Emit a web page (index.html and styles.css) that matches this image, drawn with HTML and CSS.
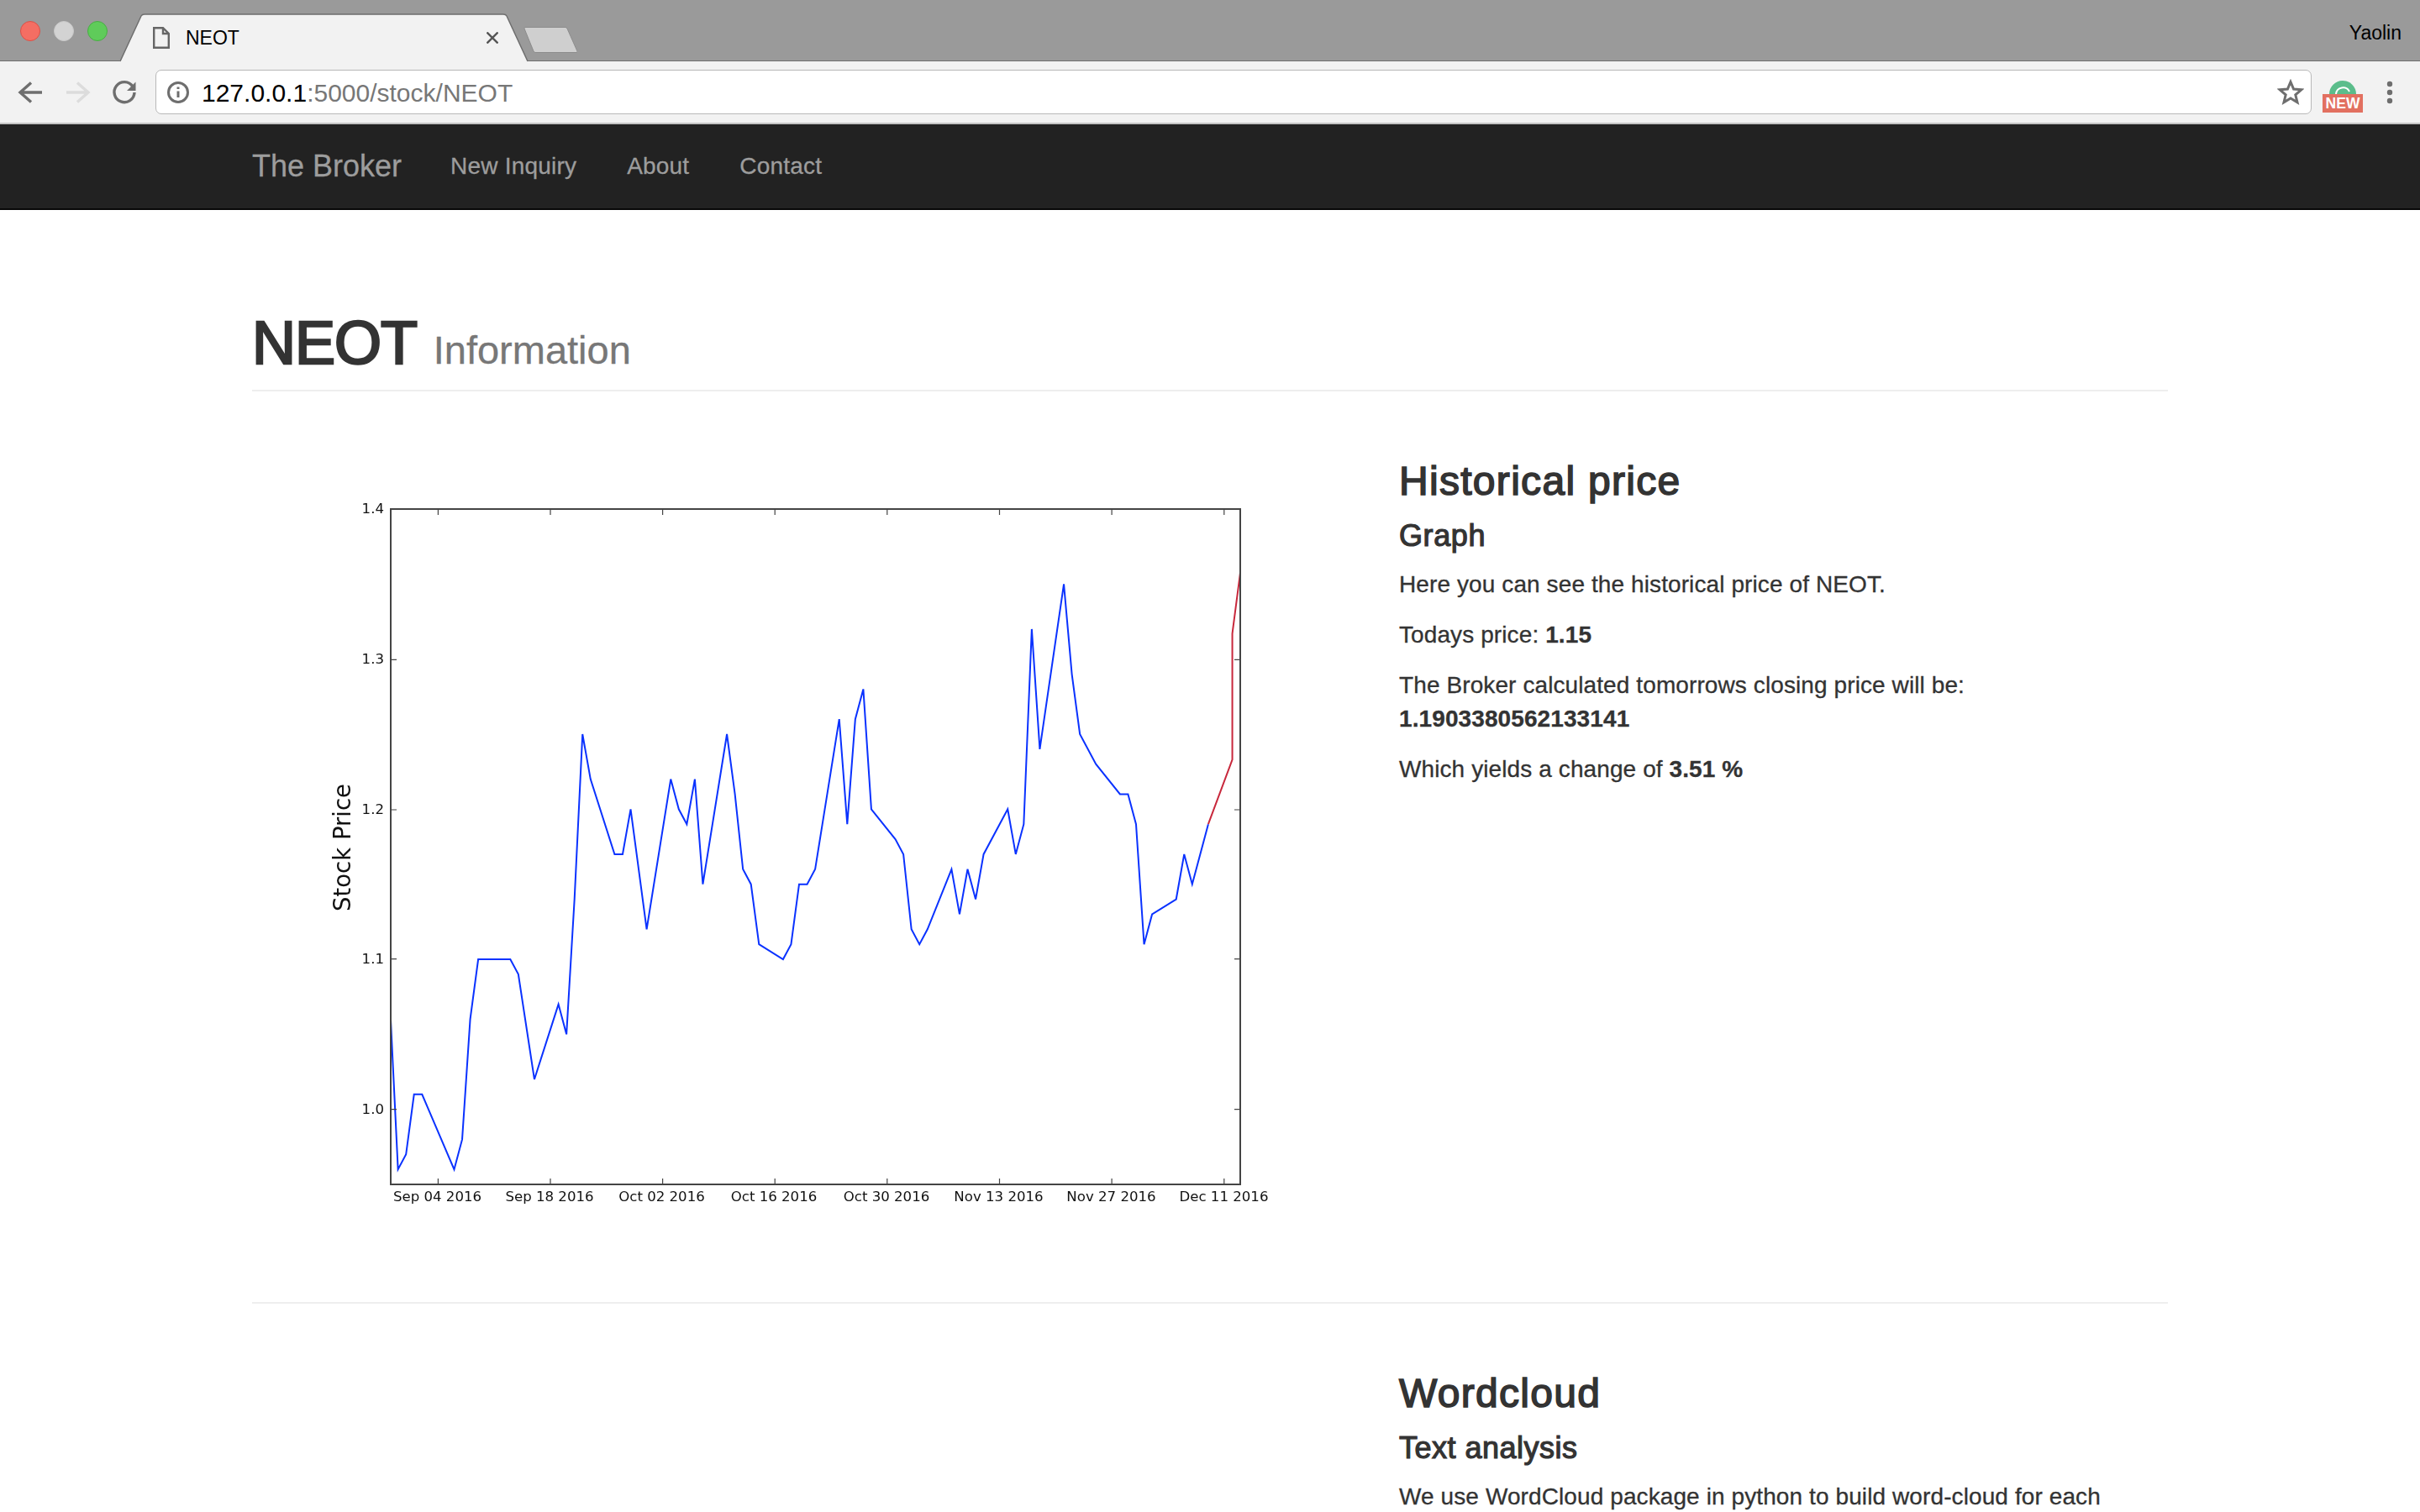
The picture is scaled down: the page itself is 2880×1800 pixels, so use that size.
FILE: index.html
```html
<!DOCTYPE html>
<html lang="en">
<head>
  <meta charset="UTF-8">
  <title>NEOT</title>
  <link rel="stylesheet" href="styles.css">
</head>
<body>
  <div class="titlebar">
    <div class="lights">
      <span class="light red"></span>
      <span class="light gray"></span>
      <span class="light green"></span>
    </div>
    <div class="tab">
      <svg class="tab-shape" viewBox="0 0 486 58"><path d="M0 57 L25 3 Q26 1 29 1 L456 1 Q459 1 460 3 L485 57" /></svg>
      <svg class="doc-icon" viewBox="0 0 20 26"><path d="M1.2 1.2 H12 L18.8 8 V24.8 H1.2 Z M12 1.2 V8 H18.8" /></svg>
      <span class="tab-title">NEOT</span>
      <svg class="tab-close" viewBox="0 0 14 14"><path d="M0.5 0.5 L13.5 13.5 M13.5 0.5 L0.5 13.5" /></svg>
    </div>
    <svg class="new-tab" viewBox="0 0 64 31"><path d="M1 2 Q0.5 0.5 2 0.5 H50 Q51 0.5 52 2 L64 29 Q64.5 30.5 63 30.5 H14 Q13 30.5 12 29 Z" /></svg>
    <span class="profile">Yaolin</span>
  </div>

  <div class="toolbar">
    <svg class="tool back" viewBox="0 0 32 32"><path d="M30 16 H4 M17 4.5 L4 16 L17 27.5" /></svg>
    <svg class="tool forward" viewBox="0 0 32 32"><path d="M3 16 H29 M16 4.5 L29 16 L16 27.5" /></svg>
    <svg class="tool reload" viewBox="0 0 32 32"><path d="M26 9 A12 12 0 1 0 28 16" /><path class="fill" d="M29.5 3.5 V14 H19 Z" /></svg>
    <div class="omnibox">
      <svg class="info" viewBox="0 0 28 28"><circle cx="14" cy="14" r="11.5" /><path d="M14 12.5 V20" /><path d="M14 7.5 V10" /></svg>
      <span class="url"><span class="host">127.0.0.1</span>:5000/stock/NEOT</span>
      <svg class="star" viewBox="0 0 32 32"><path d="M16 3.5 L19.6 12 L28.8 12.8 L21.8 18.8 L24 27.8 L16 23 L8 27.8 L10.2 18.8 L3.2 12.8 L12.4 12 Z" /></svg>
    </div>
    <div class="extension">
      <svg class="dome" viewBox="0 0 32 18"><path class="dome-bg" d="M0 18 A16 16 0 0 1 32 18 Z" /><path class="dome-arc" d="M8 18 A8.5 8.5 0 0 1 24 15" /></svg>
      <span class="badge">NEW</span>
    </div>
    <svg class="menu-dots" viewBox="0 0 8 28"><circle cx="4" cy="4" r="3.2" /><circle cx="4" cy="14" r="3.2" /><circle cx="4" cy="24" r="3.2" /></svg>
  </div>

  <nav class="navbar">
    <a class="brand">The Broker</a>
    <a class="nav-link">New Inquiry</a>
    <a class="nav-link">About</a>
    <a class="nav-link">Contact</a>
  </nav>

  <div class="container">
    <div class="page-header">
      <h1>NEOT <small>Information</small></h1>
    </div>

    <div class="row">
      <svg class="chart" viewBox="300 506 1305 1004" width="1305" height="1004">
        <svg x="464.1" y="606" width="1012" height="804" viewBox="0 -140 106 45" preserveAspectRatio="none">
          <polyline class="line-blue" points="0,-107 1,-96 2,-97 3,-101 4,-101 8,-96 9,-98 10,-106 11,-110 15,-110 16,-109 18,-102 21,-107 22,-105 23,-114 24,-125 25,-122 28,-117 29,-117 30,-120 32,-112 35,-122 36,-120 37,-119 38,-122 39,-115 42,-125 43,-121 44,-116 45,-115 46,-111 49,-110 50,-111 51,-115 52,-115 53,-116 56,-126 57,-119 58,-126 59,-128 60,-120 63,-118 64,-117 65,-112 66,-111 67,-112 70,-116 71,-113 72,-116 73,-114 74,-117 77,-120 78,-117 79,-119 80,-132 81,-124 84,-135 85,-129 86,-125 88,-123 91,-121 92,-121 93,-119 94,-111 95,-113 98,-114 99,-117 100,-115 102,-119" />
          <polyline class="line-red" points="102,-119 105,-123.3 105,-131.7 106,-135.8" />
        </svg>
        <rect class="frame" x="465" y="606" width="1011" height="804" />
        <path class="ticks" d="M521.4 606 v7 M655 606 v7 M788.6 606 v7 M922.2 606 v7 M1055.8 606 v7 M1189.5 606 v7 M1323.1 606 v7 M1456.8 606 v7 M521.4 1410 v-7 M655 1410 v-7 M788.6 1410 v-7 M922.2 1410 v-7 M1055.8 1410 v-7 M1189.5 1410 v-7 M1323.1 1410 v-7 M1456.8 1410 v-7 M465 785.3 h7 M465 964 h7 M465 1141.7 h7 M465 1320.7 h7 M1476 785.3 h-7 M1476 964 h-7 M1476 1141.7 h-7 M1476 1320.7 h-7" />
        <g class="y-labels">
          <text x="457" y="611">1.4</text>
          <text x="457" y="790">1.3</text>
          <text x="457" y="969">1.2</text>
          <text x="457" y="1147">1.1</text>
          <text x="457" y="1326">1.0</text>
        </g>
        <g class="x-labels">
          <text x="520.5" y="1430">Sep 04 2016</text>
          <text x="654" y="1430">Sep 18 2016</text>
          <text x="787.5" y="1430">Oct 02 2016</text>
          <text x="921" y="1430">Oct 16 2016</text>
          <text x="1055" y="1430">Oct 30 2016</text>
          <text x="1188.5" y="1430">Nov 13 2016</text>
          <text x="1322.5" y="1430">Nov 27 2016</text>
          <text x="1456.5" y="1430">Dec 11 2016</text>
        </g>
        <text class="y-title" x="417" y="1009" transform="rotate(-90 417 1009)">Stock Price</text>
      </svg>

      <div class="info-col">
        <h3>Historical price</h3>
        <h4>Graph</h4>
        <p>Here you can see the historical price of NEOT.</p>
        <p>Todays price: <strong>1.15</strong></p>
        <p>The Broker calculated tomorrows closing price will be: <strong>1.1903380562133141</strong></p>
        <p>Which yields a change of <strong>3.51 %</strong></p>
      </div>
    </div>

    <hr>

    <div class="row">
      <div class="chart-empty"></div>
      <div class="info-col">
        <h3>Wordcloud</h3>
        <h4 class="tight">Text analysis</h4>
        <p>We use WordCloud package in python to build word-cloud for each</p>
      </div>
    </div>
  </div>
</body>
</html>
```

FILE: styles.css
```css
html, body {
  height: 100%;
  overflow: hidden;
}
body {
  margin: 0;
  font-family: "Liberation Sans", Arial, sans-serif;
  font-size: 28px;
  line-height: 40px;
  color: #333;
  background: #fff;
}

/* browser chrome */
.titlebar {
  display: flex;
  align-items: flex-end;
  height: 73px;
  box-sizing: border-box;
  background: #9a9a9a;
  border-bottom: 1.5px solid #6e6e6e;
}
.lights {
  display: flex;
  align-self: flex-start;
  gap: 16px;
  width: 119px;
  padding: 25px 0 0 24px;
}
.light {
  width: 24px;
  height: 24px;
  box-sizing: border-box;
  border-radius: 50%;
  border: 1px solid;
}
.light.red { background: #f46e63; border-color: #dc5046; }
.light.gray { background: #d3d3d3; border-color: #c8c8c8; }
.light.green { background: #5fcb5a; border-color: #49ad44; }
.tab {
  position: relative;
  display: flex;
  align-items: center;
  width: 486px;
  height: 58px;
  margin-bottom: -2px;
  padding-left: 39px;
  box-sizing: border-box;
}
.tab-shape {
  position: absolute;
  top: 0;
  left: 0;
  width: 486px;
  height: 58px;
}
.tab-shape path {
  fill: #f2f2f2;
  stroke: #6e6e6e;
  stroke-width: 1.5;
}
.doc-icon {
  position: relative;
  width: 20px;
  height: 26px;
  margin-top: -1px;
}
.doc-icon path {
  fill: none;
  stroke: #666;
  stroke-width: 2.4;
}
.tab-title {
  position: relative;
  margin-left: 19px;
  font-size: 23px;
  color: #000;
}
.tab-close {
  position: relative;
  width: 14px;
  height: 14px;
  margin-left: 294px;
  margin-top: -1px;
}
.tab-close path {
  fill: none;
  stroke: #555;
  stroke-width: 2.4;
}
.new-tab {
  width: 64px;
  height: 31px;
  margin: 0 0 9px -6px;
}
.new-tab path {
  fill: #cfcfcf;
  stroke: #8c8c8c;
  stroke-width: 1;
}
.profile {
  margin-left: auto;
  align-self: flex-start;
  padding: 19px 22px 0 0;
  font-size: 23px;
  line-height: 40px;
  color: #000;
}
.toolbar {
  display: flex;
  align-items: center;
  height: 75px;
  box-sizing: border-box;
  padding-right: 32px;
  background: #f2f2f2;
  border-bottom: 2px solid #c4c4c4;
}
.tool {
  width: 32px;
  height: 32px;
  margin-left: 24px;
}
.tool path {
  fill: none;
  stroke-width: 3.4;
}
.tool.back { margin-left: 20px; }
.tool.back path, .tool.reload path { stroke: #6e6e6e; }
.tool.forward path { stroke: #dcdcdc; }
.tool.reload path.fill { fill: #6e6e6e; stroke: none; }
.omnibox {
  display: flex;
  align-items: center;
  flex: 1;
  height: 53px;
  margin-left: 21px;
  padding: 0 8px 0 12px;
  box-sizing: border-box;
  background: #fff;
  border: 1.5px solid #b8b8b8;
  border-radius: 7px;
}
.info {
  width: 28px;
  height: 28px;
}
.info circle, .info path {
  fill: none;
  stroke: #6e6e6e;
  stroke-width: 3;
}
.url {
  margin-left: 14px;
  padding-top: 2px;
  font-size: 30px;
  color: #777;
}
.host { color: #000; }
.star {
  width: 32px;
  height: 32px;
  margin-left: auto;
}
.star path {
  fill: none;
  stroke: #6e6e6e;
  stroke-width: 3;
}
.extension {
  display: flex;
  flex-direction: column;
  align-items: center;
  width: 48px;
  margin-left: 13px;
  margin-top: 8px;
}
.dome {
  width: 32px;
  height: 18px;
  display: block;
}
.dome-bg { fill: #5bbd8b; }
.dome-arc {
  fill: none;
  stroke: #fff;
  stroke-width: 2;
}
.badge {
  width: 48px;
  height: 22px;
  background: #e27060;
  color: #fff;
  font-size: 17.5px;
  font-weight: bold;
  line-height: 23px;
  text-align: center;
}
.menu-dots {
  width: 8px;
  height: 28px;
  margin-left: 28px;
  fill: #6e6e6e;
}

/* navbar */
.navbar {
  display: flex;
  align-items: center;
  height: 102px;
  box-sizing: border-box;
  padding-left: 300px;
  background: #222;
  border-bottom: 2px solid #080808;
  color: #9d9d9d;
}
.brand {
  font-size: 36px;
  margin-right: 28px;
  -webkit-text-stroke: 0.3px #9d9d9d;
}
.nav-link {
  padding: 0 30px;
  font-size: 28px;
  letter-spacing: 0.2px;
  -webkit-text-stroke: 0.3px #9d9d9d;
}

/* page */
.container {
  width: 2280px;
  margin: 0 auto;
}
.page-header {
  margin: 119px 0 40px;
  padding-bottom: 8px;
  border-bottom: 2px solid #eee;
}
h1 {
  margin: 0;
  font-size: 72px;
  line-height: 79px;
  font-weight: 400;
  -webkit-text-stroke: 2.6px #333;
  letter-spacing: -1px;
}
h1 small {
  margin-left: 2px;
  font-size: 47px;
  color: #777;
  letter-spacing: 0;
  -webkit-text-stroke: 0.3px #777;
}
.row {
  display: grid;
  grid-template-columns: 1305px 915px;
  gap: 60px;
}
.chart {
  display: block;
  filter: blur(0.45px);
}
.line-blue, .line-red {
  fill: none;
  stroke-width: 2;
  vector-effect: non-scaling-stroke;
}
.line-blue { stroke: #0a32ff; }
.line-red { stroke: #c8283c; }
.frame, .ticks {
  fill: none;
  stroke: #444;
  stroke-width: 2;
}
.ticks { stroke-width: 1.2; }
.y-labels text, .x-labels text, .y-title {
  font-family: "DejaVu Sans", sans-serif;
  fill: #111;
}
.y-labels text {
  font-size: 16.6px;
  text-anchor: end;
}
.x-labels text {
  font-size: 16.6px;
  text-anchor: middle;
}
.y-title {
  font-size: 27.5px;
  text-anchor: middle;
}
.info-col h3 {
  margin: 40px 0 19px;
  font-size: 48px;
  line-height: 53px;
  font-weight: 400;
  letter-spacing: 1.3px;
  -webkit-text-stroke: 1.6px #333;
}
.info-col h4 {
  margin: 0 0 18px;
  font-size: 36px;
  line-height: 40px;
  font-weight: 400;
  letter-spacing: 0.6px;
  -webkit-text-stroke: 1.2px #333;
}
.info-col h4.tight { letter-spacing: 0.5px; }
.info-col p {
  margin: 0 0 20px;
  letter-spacing: 0.1px;
  -webkit-text-stroke: 0.3px #333;
}
hr {
  height: 0;
  margin: 40px 0;
  border: 0;
  border-top: 2px solid #eee;
}
```
